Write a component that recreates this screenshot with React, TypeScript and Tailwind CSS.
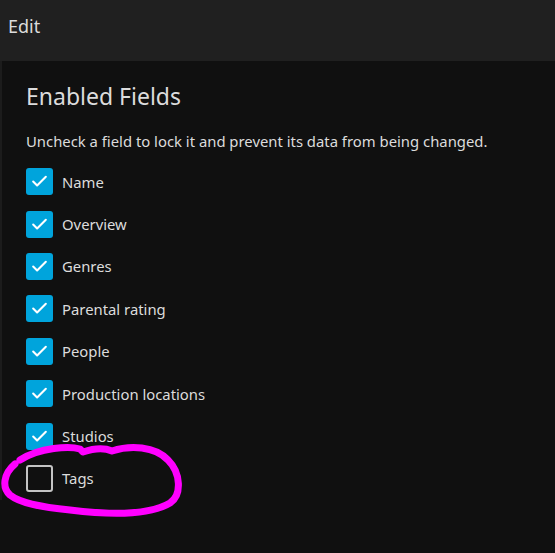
import { Check } from "lucide-react";

const fields = [
  { name: "Name", on: true },
  { name: "Overview", on: true },
  { name: "Genres", on: true },
  { name: "Parental rating", on: true },
  { name: "People", on: true },
  { name: "Production locations", on: true },
  { name: "Studios", on: true },
  { name: "Tags", on: false },
];

export default function App() {
  return (
    <div
      className="relative h-[553px] w-[555px] overflow-hidden bg-[#101010] text-[#dcdcdc]"
      style={{ fontFamily: '"Noto Sans", "Open Sans", sans-serif' }}
    >
      <div className="h-[61px] bg-[#202020] px-2 pt-[13px] text-[18px] leading-[26px]">Edit</div>
      <div className="border-l-2 border-[#1c1c1c] pl-[24px] pt-[19px]">
        <h2 className="text-[23px] leading-[32px]">Enabled Fields</h2>
        <p className="mt-[17px] text-[14.85px] leading-[24px]">
          Uncheck a field to lock it and prevent its data from being changed.
        </p>
        <div className="mt-[7.5px] flex flex-col">
          {fields.map((f) => (
            <label key={f.name} className="flex h-[42.4px] items-center gap-[9px]">
              {f.on ? (
                <span className="flex h-[27px] w-[27px] items-center justify-center rounded-[3px] bg-[#00a4dc]">
                  <Check className="h-[19px] w-[19px] text-white" strokeWidth={2.6} />
                </span>
              ) : (
                <span className="h-[27px] w-[27px] rounded-[3px] border-2 border-[#c4c4c4]" />
              )}
              <span className="text-[14.85px] leading-[20px]">{f.name}</span>
            </label>
          ))}
        </div>
      </div>
      <svg className="pointer-events-none absolute left-0 top-0" width="555" height="553">
        <path
          d="M 20 460 C 40 447, 70 446, 80 449 L 83 452 C 95 448, 105 448, 112 451 C 130 445, 155 446, 168 460 C 181 473, 182 495, 170 503 C 150 515, 110 515, 70 510 C 40 507, 20 503, 10 495 C 2 488, 3 474, 15 464"
          fill="none"
          stroke="#ff00ff"
          strokeWidth="7"
          strokeLinecap="round"
          strokeLinejoin="round"
        />
      </svg>
    </div>
  );
}
